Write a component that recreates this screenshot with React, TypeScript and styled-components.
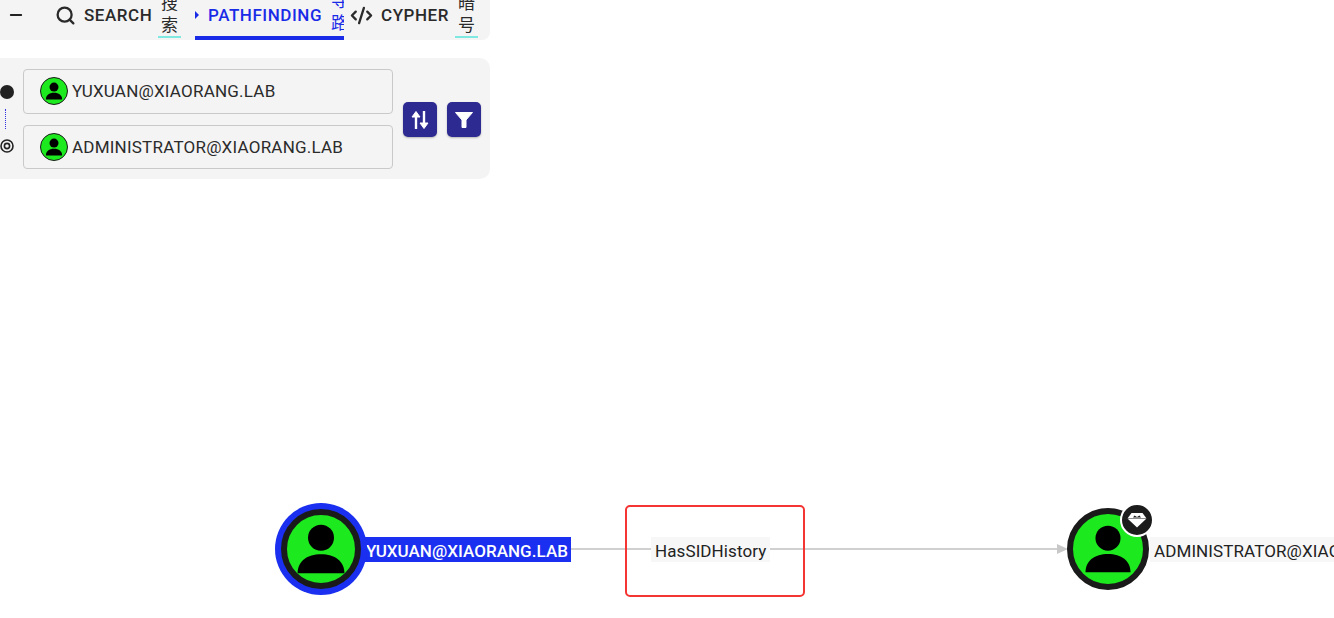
import React from 'react';
import styled, { createGlobalStyle } from 'styled-components';
import { Search, Minus, CodeXml } from 'lucide-react';

const GlobalStyle = createGlobalStyle`
	html, body {
		margin: 0;
		padding: 0;
		background: #fff;
		overflow: hidden;
	}
	body {
		font-family: Roboto, "Noto Sans CJK SC", sans-serif;
		color: #222;
	}
`;

const Page = styled.div`
	width: 1334px;
	height: 618px;
	display: flex;
	flex-direction: column;
	overflow: hidden;
`;

const TabBar = styled.div`
	width: 490px;
	height: 40px;
	flex: none;
	display: flex;
	align-items: flex-end;
	background: #f4f4f4;
	border-bottom-right-radius: 8px;
`;

const CollapseButton = styled.div`
	box-sizing: border-box;
	width: 32px;
	height: 40px;
	padding-bottom: 10px;
	flex: none;
	display: flex;
	align-items: center;
	justify-content: center;
	color: #222;
`;

const Tab = styled.div<{ $active?: boolean; $width: number; $left: number }>`
	position: relative;
	box-sizing: border-box;
	width: ${(p) => p.$width}px;
	height: 40px;
	margin-left: ${(p) => p.$left}px;
	flex: none;
	display: flex;
	align-items: flex-end;
	overflow: ${(p) => (p.$active ? 'hidden' : 'visible')};
	color: ${(p) => (p.$active ? '#1a2be8' : '#2a2a2a')};
	border-bottom: ${(p) => (p.$active ? '4px solid #1a2be8' : '0')};
`;

const TabLabel = styled.span<{ $left: number }>`
	position: absolute;
	left: ${(p) => p.$left}px;
	top: 5px;
	font-size: 17px;
	font-weight: 500;
	line-height: 20px;
	letter-spacing: 0.55px;
	white-space: nowrap;
`;

const TabIcon = styled.span<{ $left: number }>`
	position: absolute;
	left: ${(p) => p.$left}px;
	top: 4px;
	display: flex;
	height: 22px;
	align-items: center;
`;

const TabNote = styled.span<{ $left: number; $underline?: boolean }>`
	position: absolute;
	left: ${(p) => p.$left}px;
	bottom: 2px;
	width: 23px;
	box-sizing: border-box;
	padding: 0 2px;
	font-size: 17px;
	line-height: 22px;
	text-align: center;
	word-break: break-all;
	border-bottom: ${(p) => (p.$underline ? '2px solid #7fe8e0' : '0')};
`;

const SearchPanel = styled.div`
	box-sizing: border-box;
	width: 490px;
	height: 121px;
	margin-top: 18px;
	flex: none;
	display: flex;
	align-items: center;
	padding: 1px 10px 0 0;
	background: #f4f4f4;
	border-radius: 0 10px 10px 0;
`;

const Gutter = styled.div`
	box-sizing: border-box;
	width: 13px;
	height: 68px;
	margin-right: 10px;
	flex: none;
	display: flex;
	flex-direction: column;
	align-items: center;
	justify-content: space-between;
`;

const Dot = styled.div`
	width: 14px;
	height: 14px;
	border-radius: 50%;
	background: #222;
`;

const DottedLine = styled.div`
	width: 0;
	height: 20px;
	margin-right: 2px;
	border-left: 1px dotted #3030e0;
`;

const Fields = styled.div`
	width: 370px;
	flex: none;
	display: flex;
	flex-direction: column;
	gap: 11px;
`;

const Field = styled.div`
	box-sizing: border-box;
	height: 44.5px;
	display: flex;
	align-items: center;
	gap: 4px;
	padding-left: 16px;
	background: #f4f4f4;
	border: 1px solid #c9c9c9;
	border-radius: 4px;
	font-size: 17px;
	letter-spacing: 0.22px;
	color: #2b2b2b;
`;

const Avatar = styled.div`
	box-sizing: border-box;
	width: 28px;
	height: 28px;
	flex: none;
	display: flex;
	align-items: center;
	justify-content: center;
	background: #1de91f;
	border: 1.5px solid #1a1a1a;
	border-radius: 50%;
`;

const Actions = styled.div`
	margin: 1px 0 0 10px;
	display: flex;
	gap: 10px;
`;

const ActionButton = styled.div`
	width: 34px;
	height: 35px;
	display: flex;
	align-items: center;
	justify-content: center;
	background: #2d2a92;
	border-radius: 5px;
	box-shadow: 0 1px 2px rgba(0, 0, 0, 0.25);
`;

const Canvas = styled.div`
	position: relative;
	flex: 1;
`;

const EdgeLine = styled.div`
	position: absolute;
	left: 366px;
	top: 368.5px;
	width: 692px;
	height: 2.5px;
	background: #d0d0d0;
`;

const EdgeArrow = styled.div`
	position: absolute;
	left: 1057px;
	top: 365px;
	width: 0;
	height: 0;
	border-left: 11px solid #c8c8c8;
	border-top: 5px solid transparent;
	border-bottom: 5px solid transparent;
`;

const EdgeHighlight = styled.div`
	box-sizing: border-box;
	position: absolute;
	left: 625px;
	top: 326px;
	width: 180px;
	height: 92px;
	border: 2px solid #f53434;
	border-radius: 5px;
`;

const NodeCircle = styled.div<{ $x: number; $y: number; $size: number; $ring: boolean }>`
	box-sizing: border-box;
	position: absolute;
	left: ${(p) => p.$x}px;
	top: ${(p) => p.$y}px;
	width: ${(p) => p.$size}px;
	height: ${(p) => p.$size}px;
	display: flex;
	align-items: center;
	justify-content: center;
	background: #1de91f;
	border: 6px solid #1a1a1a;
	border-radius: 50%;
	box-shadow: ${(p) => (p.$ring ? '0 0 0 6px #1a2fef' : 'none')};
`;

const NodeLabel = styled.div<{ $x: number; $y: number; $selected?: boolean }>`
	position: absolute;
	left: ${(p) => p.$x}px;
	top: ${(p) => p.$y}px;
	height: 25px;
	padding: 0 ${(p) => (p.$selected ? '3px' : '4px')} 0 ${(p) => (p.$selected ? '1px' : '4px')};
	font-size: 17px;
	font-weight: ${(p) => (p.$selected ? 500 : 400)};
	letter-spacing: ${(p) => (p.$selected ? '0.04px' : '0.1px')};
	line-height: 29px;
	white-space: nowrap;
	background: ${(p) => (p.$selected ? '#1a2fef' : '#f7f7f7')};
	color: ${(p) => (p.$selected ? '#fff' : '#222')};
`;

const Badge = styled.div`
	box-sizing: border-box;
	position: absolute;
	left: 1120px;
	top: 324px;
	width: 34px;
	height: 34px;
	display: flex;
	align-items: center;
	justify-content: center;
	background: #1c1c1c;
	border: 2.5px solid #fff;
	border-radius: 50%;
`;

function PersonIcon({ size }: { size: number }) {
	return (
		<svg width={size} height={size} viewBox="0 0 60 60">
			<circle cx="30" cy="17" r="15" fill="#000" />
			<path d="M3 58 C3 44 14 36 30 36 C46 36 57 44 57 58 Z" fill="#000" />
		</svg>
	);
}

function TargetIcon() {
	return (
		<svg width="14" height="14" viewBox="0 0 14 14">
			<circle cx="7" cy="7" r="6" fill="none" stroke="#222" strokeWidth="1.6" />
			<circle cx="7" cy="7" r="2.6" fill="none" stroke="#222" strokeWidth="1.6" />
		</svg>
	);
}

function TriangleMark() {
	return (
		<svg width="4" height="8" viewBox="0 0 4 8">
			<path d="M0 0 L4 4 L0 8 Z" fill="#1a2be8" />
		</svg>
	);
}

function SwapIcon() {
	return (
		<svg width="18" height="20" viewBox="0 0 18 20" fill="none" stroke="#fff" strokeWidth="2.4">
			<path d="M5 19 V4" />
			<path d="M1 7 L5 1.5 L9 7 Z" fill="#fff" strokeWidth="1" />
			<path d="M13 1 V16" />
			<path d="M9 13 L13 18.5 L17 13 Z" fill="#fff" strokeWidth="1" />
		</svg>
	);
}

function FilterIcon() {
	return (
		<svg width="18" height="16" viewBox="0 0 18 16">
			<path d="M0.5 0.5 H17.5 L11 8 V15.5 H7 V8 Z" fill="#fff" stroke="#fff" strokeLinejoin="round" />
		</svg>
	);
}

function GemIcon() {
	return (
		<svg width="20" height="16" viewBox="0 0 20 16">
			<path d="M0.5 6.5 L4.5 1 H15.5 L19.5 6.5 Z" fill="#fff" />
			<path d="M6 5.5 L7.5 3.5 L10 5 L12.5 3.5 L14 5.5 Z" fill="#1c1c1c" />
			<path d="M1 7 H19 L10 15.5 Z" fill="#fff" />
		</svg>
	);
}

export default function App() {
	return (
		<Page>
			<GlobalStyle />
			<TabBar>
				<CollapseButton>
					<Minus size={18} strokeWidth={2.4} />
				</CollapseButton>
				<Tab $width={130} $left={20}>
					<TabIcon $left={3}>
						<Search size={21} strokeWidth={2.6} />
					</TabIcon>
					<TabLabel $left={32}>SEARCH</TabLabel>
					<TabNote $left={106} $underline>搜索</TabNote>
				</Tab>
				<Tab $active $width={149} $left={13}>
					<TabIcon $left={0}>
						<TriangleMark />
					</TabIcon>
					<TabLabel $left={13}>PATHFINDING</TabLabel>
					<TabNote $left={133}>寻路</TabNote>
				</Tab>
				<Tab $width={140} $left={6}>
					<TabIcon $left={0}>
						<CodeXml size={23} strokeWidth={2.4} />
					</TabIcon>
					<TabLabel $left={31}>CYPHER</TabLabel>
					<TabNote $left={105} $underline>暗号</TabNote>
				</Tab>
			</TabBar>

			<SearchPanel>
				<Gutter>
					<Dot />
					<DottedLine />
					<TargetIcon />
				</Gutter>
				<Fields>
					<Field>
						<Avatar>
							<PersonIcon size={18} />
						</Avatar>
						YUXUAN@XIAORANG.LAB
					</Field>
					<Field>
						<Avatar>
							<PersonIcon size={18} />
						</Avatar>
						ADMINISTRATOR@XIAORANG.LAB
					</Field>
				</Fields>
				<Actions>
					<ActionButton>
						<SwapIcon />
					</ActionButton>
					<ActionButton>
						<FilterIcon />
					</ActionButton>
				</Actions>
			</SearchPanel>

			<Canvas>
				<EdgeLine />
				<EdgeArrow />
				<EdgeHighlight />
				<NodeLabel $x={651} $y={358}>HasSIDHistory</NodeLabel>
				<NodeLabel $x={365} $y={358} $selected>YUXUAN@XIAORANG.LAB</NodeLabel>
				<NodeCircle $x={281} $y={330} $size={80} $ring>
					<PersonIcon size={52} />
				</NodeCircle>
				<NodeLabel $x={1150} $y={358}>ADMINISTRATOR@XIAORANG.LAB</NodeLabel>
				<NodeCircle $x={1067} $y={329} $size={82} $ring={false}>
					<PersonIcon size={50} />
				</NodeCircle>
				<Badge>
					<GemIcon />
				</Badge>
			</Canvas>
		</Page>
	);
}
